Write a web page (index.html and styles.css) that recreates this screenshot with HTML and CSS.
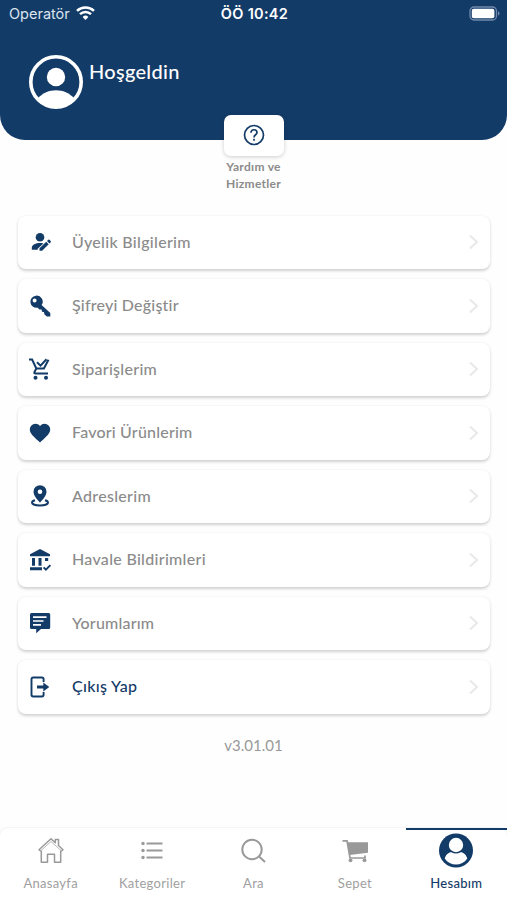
FILE: index.html
```html
<!DOCTYPE html>
<html lang="tr">
<head>
<meta charset="utf-8">
<title>Hesabım</title>
<link rel="stylesheet" href="styles.css">
</head>
<body>
<div class="app">
  <header class="hero">
    <div class="status">
      <div class="carrier"><span>Operatör</span>
        <svg width="19" height="15" viewBox="0 0 19 15" fill="none" stroke="#fff" stroke-width="2.5"><path d="M1 4.900a12.500 12.500 0 0 1 17 0M4 8.200a8 8 0 0 1 11 0"/><path d="M6.600 10.900a4.200 4.200 0 0 1 5.800 0L9.500 14z" fill="#fff" stroke="none"/></svg>
      </div>
      <div class="clock">ÖÖ 10:42</div>
      <svg class="battery" width="31" height="15" viewBox="0 0 31 15"><rect x="1" y="1" width="26.500" height="13" rx="4" fill="none" stroke="#7089ab" stroke-width="1.300"/><rect x="2.800" y="2.800" width="22.600" height="9.400" rx="2" fill="#fff"/><path d="M29 5.300v4.400q1.500-.6 1.500-2.200T29 5.300z" fill="#7089ab"/></svg>
    </div>
    <div class="welcome">
      <svg width="54" height="54" viewBox="0 0 54 54"><circle cx="27" cy="27" r="25.200" fill="none" stroke="#fff" stroke-width="3.600"/><circle cx="27" cy="22" r="9.200" fill="#fff"/><path d="M9 43C14 38 20 35.300 27 35.300S40 38 45 43L46 45A26 26 0 0 1 8 45z" fill="#fff"/></svg>
      <span>Hoşgeldin</span>
    </div>
  </header>
  <section class="help">
    <div class="help-button"><svg width="22" height="22" viewBox="0 0 22 22" fill="none" stroke="#133b68" stroke-width="1.700"><circle cx="11" cy="11" r="9.500"/><path d="M8 8.700C8 4.700 14 4.900 14 8.500c0 2.300-3 2.300-3 4.900"/><path d="M11 14.700v2"/></svg></div>
    <p>Yardım ve<br>Hizmetler</p>
  </section>
  <main class="menu">
    <a class="row"><svg class="icon" viewBox="0 0 24 24"><circle cx="12" cy="7.200" r="4.300"/><path d="M3.800 19.800v-2c0-3 4-4.700 8.200-4.700 1.300 0 2.400.1 3.400.4l-5.700 5.200v1.100z"/><path d="M11.500 20.700v-2.500l6.700-6.400 2.500 2.500-6.600 6.400z"/><path d="m19 11 1.300-1.200q.6-.5 1.200 0l1.200 1.300q.5.500 0 1.100L21.500 13.500z"/></svg><span class="label wide">Üyelik Bilgilerim</span><svg class="chev" viewBox="0 0 10 16"><path d="m1 1.500 7 6.500-7 6.500"/></svg></a>
    <a class="row"><svg class="icon" viewBox="0 0 24 24"><path fill-rule="evenodd" d="M7.800 1.700a6 6 0 1 0 1.500 11.900l2.200 1.900h2.200l.2 2.300 2.100.2.300 2.300 2.500 2.200h3.500v-3.400l-8.700-8A6 6 0 0 0 7.800 1.700zM6.600 4.600a2 2 0 1 1 0 4 2 2 0 0 1 0-4z"/></svg><span class="label">Şifreyi Değiştir</span><svg class="chev" viewBox="0 0 10 16"><path d="m1 1.500 7 6.500-7 6.500"/></svg></a>
    <a class="row"><svg class="icon" viewBox="0 0 24 24"><g fill="none" stroke="#133b68" stroke-width="2"><path d="M1 2.500h3.100l4.200 9h7.600l4.600-8.700M8.300 11.500 6.500 15q-.7 1.500 1 1.500H20M9 5.200l3.500 3.400 6-6.400"/></g><circle cx="7.500" cy="20.700" r="2"/><circle cx="18" cy="20.700" r="2"/></svg><span class="label wide">Siparişlerim</span><svg class="chev" viewBox="0 0 10 16"><path d="m1 1.500 7 6.500-7 6.500"/></svg></a>
    <a class="row"><svg class="icon" viewBox="0 0 24 24"><path d="M12 21.400 10.500 20C5.200 15.300 1.800 12.200 1.800 8.400a5.500 5.500 0 0 1 5.600-5.600c1.800 0 3.500.8 4.600 2.100a6 6 0 0 1 4.600-2.100 5.500 5.500 0 0 1 5.600 5.600c0 3.800-3.400 6.900-8.700 11.600z"/></svg><span class="label">Favori Ürünlerim</span><svg class="chev" viewBox="0 0 10 16"><path d="m1 1.500 7 6.500-7 6.500"/></svg></a>
    <a class="row"><svg class="icon" viewBox="0 0 24 24"><path fill-rule="evenodd" d="M12 1.200a6.500 6.500 0 0 0-6.500 6.500c0 4.700 6.500 10.800 6.500 10.800s6.500-6.100 6.500-10.800A6.500 6.500 0 0 0 12 1.200zm0 4.200a2.300 2.300 0 1 1 0 4.600 2.300 2.300 0 0 1 0-4.600z"/><path d="M7 16.200c-2 .6-3 1.300-3 2.200 0 1.800 3.800 3 8 3s8-1.200 8-3c0-.9-1-1.600-3-2.200" fill="none" stroke="#133b68" stroke-width="2"/></svg><span class="label wide">Adreslerim</span><svg class="chev" viewBox="0 0 10 16"><path d="m1 1.500 7 6.500-7 6.500"/></svg></a>
    <a class="row"><svg class="icon" viewBox="0 0 24 24"><path d="M12 1 22 6.200v2H2v-2zM4 10h3v7.700H4zM10.500 10h3v7.700h-3zM17 10h3.200v3H17zM2 19.200h12v3H2z"/><path d="m15.600 19.300 2.300 2.400 4.500-4.600" fill="none" stroke="#133b68" stroke-width="1.900"/></svg><span class="label wide">Havale Bildirimleri</span><svg class="chev" viewBox="0 0 10 16"><path d="m1 1.500 7 6.500-7 6.500"/></svg></a>
    <a class="row"><svg class="icon" viewBox="0 0 24 24"><path d="M3.500 2h17.200q1.500 0 1.500 1.500v13q0 1.500-1.500 1.500H13l-4.800 4.300V18H3.500Q2 18 2 16.500v-13Q2 2 3.500 2z"/><path d="M5 6.200h13.500M5 10h10.500M5 13.800h8" fill="none" stroke="#fff" stroke-width="1.700"/></svg><span class="label">Yorumlarım</span><svg class="chev" viewBox="0 0 10 16"><path d="m1 1.500 7 6.500-7 6.500"/></svg></a>
    <a class="row exit"><svg class="icon" viewBox="0 0 24 24"><path d="M15.600 7V4.200q0-1.700-1.700-1.700H5.200q-1.700 0-1.700 1.700v15.600q0 1.700 1.700 1.700h8.700q1.700 0 1.700-1.700V17" fill="none" stroke="#133b68" stroke-width="1.900"/><path d="M9 10.600h6.300V7.400l6 4.600-6 4.600v-3.200H9z"/></svg><span class="label">Çıkış Yap</span><svg class="chev" viewBox="0 0 10 16"><path d="m1 1.500 7 6.500-7 6.500"/></svg></a>
  </main>
  <p class="version">v3.01.01</p>
  <nav class="tabs">
    <a class="tab"><svg width="36" height="36" viewBox="0 0 36 36" fill="none" stroke="#999" stroke-width="1.500" stroke-linejoin="round"><path d="M7.500 18 6 16.700 18 5.700l4.300 4V6.500h3.200v6l4.500 4.200-1.500 1.300M8.300 17.500v11.800h6.200v-8.100h7v8.100h6.200V17.500"/><path d="m7.500 18 10.500-9.500L28.500 18" stroke-width=".7"/></svg><span>Anasayfa</span></a>
    <a class="tab"><svg width="36" height="36" viewBox="0 0 36 36"><path d="M12.500 10.500h16M12.500 17.500h16M12.500 24.500h16" stroke="#999" stroke-width="2"/><g fill="#999"><circle cx="9" cy="10.500" r="1.700"/><circle cx="9" cy="17.500" r="1.700"/><circle cx="9" cy="24.500" r="1.700"/></g></svg><span>Kategoriler</span></a>
    <a class="tab"><svg width="36" height="36" viewBox="0 0 36 36" fill="none" stroke="#999" stroke-width="2"><circle cx="17" cy="16.500" r="9.700"/><path d="m24 23.500 6 5.500"/></svg><span>Ara</span></a>
    <a class="tab"><svg width="36" height="36" viewBox="0 0 36 36"><path d="M10.500 9.200H31v10.600l-18.500 2.200z" fill="#999"/><path d="M5.500 7.800H10L13 25H28v-2.500" fill="none" stroke="#999" stroke-width="1.700"/><circle cx="13.500" cy="27.300" r="1.900" fill="#999"/><circle cx="27.500" cy="27.300" r="1.900" fill="#999"/></svg><span>Sepet</span></a>
    <a class="tab active"><svg width="36" height="36" viewBox="0 0 36 36"><circle cx="18" cy="17.500" r="17" fill="#133b68"/><circle cx="18" cy="12" r="7.200" fill="#fff"/><path d="M6.700 25.500c1-4 4-6.300 6.600-6.300 3 1.600 6.400 1.600 9.400 0 2.600 0 5.600 2.300 6.600 6.300-2.800 4-6.800 6-11.300 6s-8.500-2-11.300-6z" fill="#fff"/></svg><span>Hesabım</span></a>
  </nav>
</div>
</body>
</html>
```

FILE: styles.css
```css
* { box-sizing: border-box; }
body { margin: 0; background: #fff; font-family: Lato, "Noto Sans", sans-serif; color: #8b8b8b; }
p { margin: 0; }
svg { display: block; flex: none; }
.app { width: 507px; height: 900px; display: flex; flex-direction: column; overflow: hidden; background: #fefefe; }
.hero { height: 139.500px; flex: none; background: #133b68; border-radius: 0 0 25px 25px; color: #fff; }
.status { height: 27px; display: grid; grid-template-columns: 1fr auto 1fr; align-items: center; padding: 0 7px 0 9px; font-family: Inter, sans-serif; }
.carrier { display: flex; align-items: center; gap: 6px; font-size: 14.5px; color: #dce4ee; }
.clock { font-size: 14.5px; font-weight: 600; letter-spacing: .3px; }
.battery { justify-self: end; }
.welcome { display: flex; gap: 6px; padding: 28px 0 0 29px; font-size: 20px; line-height: 24px; font-weight: 500; }
.welcome span { padding-top: 4px; letter-spacing: .3px; }
.help { display: flex; flex-direction: column; align-items: center; flex: none; height: 76.500px; margin-top: -24.500px; margin-bottom: 24px; text-align: center; font-size: 12px; line-height: 16.5px; font-weight: 700; letter-spacing: .3px; }
.help-button { width: 60px; height: 41px; flex: none; margin-bottom: 3px; padding-bottom: 1px; border-radius: 7px; background: #fff; box-shadow: 0 1px 4px #0003; display: grid; place-items: center; }
.menu { display: flex; flex-direction: column; gap: 10px; padding: 0 17px 0 18px; }
.row { height: 53.500px; display: flex; align-items: center; padding: 0 11px 0 10px; border-radius: 8px; background: #fff; box-shadow: 0 1.500px 3px #0000002e; font-size: 16px; font-weight: 500; }
.icon { width: 24px; height: 24px; fill: #133b68; }
.label { flex: 1; margin-left: 20px; padding-bottom: 2px; letter-spacing: .2px; }
.wide { letter-spacing: .3px; }
.exit { color: #133b68; }
.exit .label { letter-spacing: .35px; }
.chev { width: 10px; height: 16px; fill: none; stroke: #e8e8e8; stroke-width: 2; }
.version { text-align: center; font-size: 15px; line-height: 20px; margin-top: 21px; color: #999; }
.tabs { height: 72.500px; flex: none; margin-top: auto; display: grid; grid-template-columns: repeat(5, 1fr); background: #fff; border-radius: 8px 8px 0 0; box-shadow: 0 0 2px #0002; }
.tab { display: flex; flex-direction: column; align-items: center; padding-top: 5.500px; font-size: 13px; line-height: 18px; color: #a0a0a0; border-top: 0 solid #133b68; }
.tab span { margin-top: 5px; letter-spacing: .3px; }
.active { color: #133b68; border-top-width: 2px; padding-top: 3.500px; font-weight: 500; }
```
